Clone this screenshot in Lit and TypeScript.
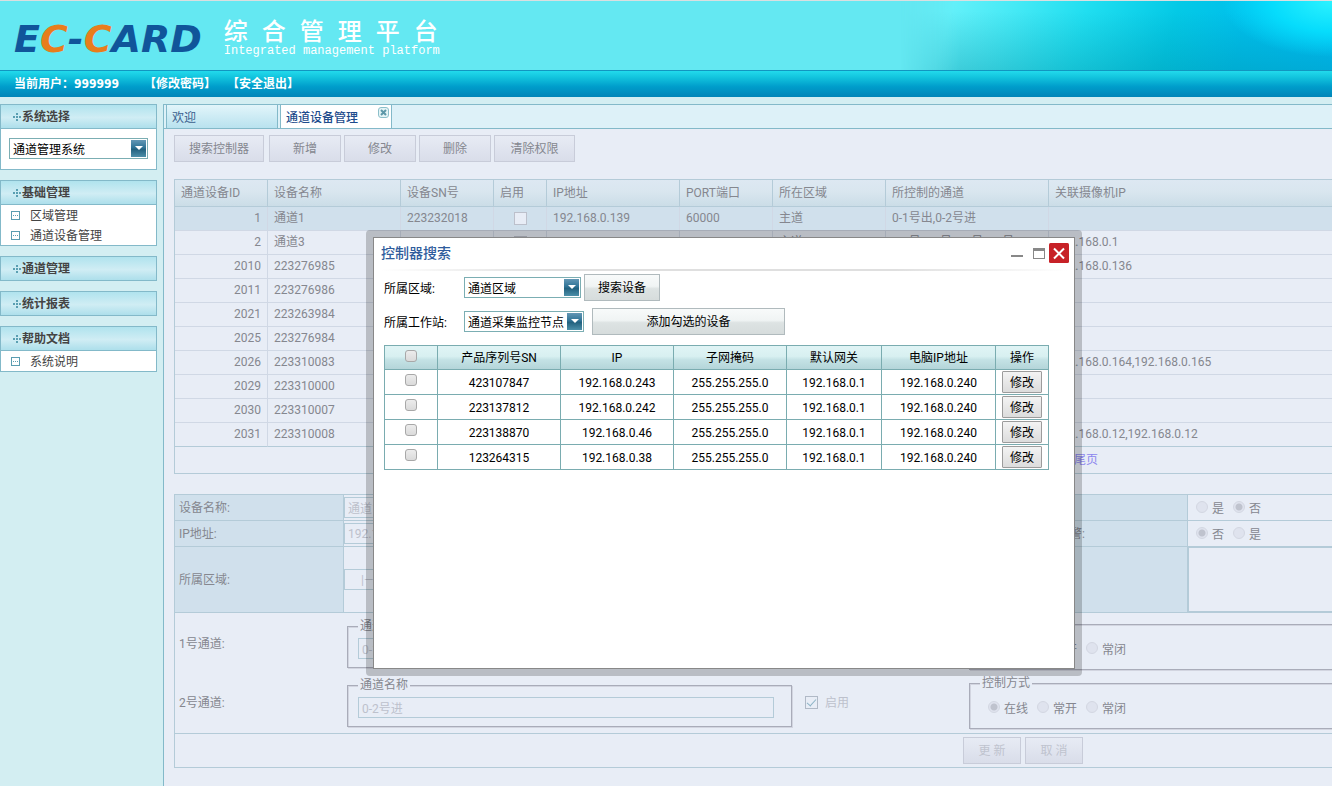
import { LitElement, html, css } from "lit";
import { customElement, property } from "lit/decorators.js";

interface Device {
  id: number;
  name: string;
  sn?: string;
  ip?: string;
  port?: string;
  area?: string;
  channels?: string;
  camera?: string;
}

const DEVICES: Device[] = [
  { id: 1, name: "通道1", sn: "223232018", ip: "192.168.0.139", port: "60000", area: "主道", channels: "0-1号出,0-2号进" },
  { id: 2, name: "通道3", sn: "223276990", ip: "192.168.0.140", port: "60000", area: "主道", channels: "0-1号,0-2号,0-3号,0-4号", camera: "192.168.0.1" },
  { id: 2010, name: "223276985", camera: "192.168.0.136" },
  { id: 2011, name: "223276986" },
  { id: 2021, name: "223263984" },
  { id: 2025, name: "223276984" },
  { id: 2026, name: "223310083", camera: "192.168.0.164,192.168.0.165" },
  { id: 2029, name: "223310000" },
  { id: 2030, name: "223310007" },
  { id: 2031, name: "223310008", camera: "192.168.0.12,192.168.0.12" },
];

const FOUND = [
  ["423107847", "192.168.0.243"],
  ["223137812", "192.168.0.242"],
  ["223138870", "192.168.0.46"],
  ["123264315", "192.168.0.38"],
];

const MENU: { title: string; items: string[] }[] = [
  { title: "基础管理", items: ["区域管理", "通道设备管理"] },
  { title: "通道管理", items: [] },
  { title: "统计报表", items: [] },
  { title: "帮助文档", items: ["系统说明"] },
];

const base = css`
  * {
    box-sizing: border-box;
  }
  button,
  input,
  select,
  textarea {
    font: inherit;
    color: inherit;
    margin: 0;
    border-radius: 0;
  }
  a {
    color: inherit;
    text-decoration: none;
  }
  table {
    border-spacing: 0;
    table-layout: fixed;
  }
  th {
    font-weight: normal;
  }
`;

@customElement("combo-box")
class ComboBox extends LitElement {
  @property() label = "";
  @property() value = "";

  static styles = [
    base,
    css`
      :host {
        display: grid;
        height: 21px;
        background: #fff;
        color: #000;
      }
      .select,
      .arrow {
        grid-area: 1 / 1;
      }
      .select {
        appearance: none;
        width: 100%;
        height: 21px;
        padding: 2px 18px 0 3px;
        border: 1px solid #7baeb3;
        background: transparent;
        line-height: 18px;
        outline: 0;
      }
      .arrow {
        justify-self: end;
        align-self: center;
        margin-right: 2px;
        pointer-events: none;
      }
    `,
  ];

  render() {
    return html`
      <select class="select" aria-label=${this.label}>
        <option>${this.value}</option>
      </select>
      <svg class="arrow" width="15" height="17" viewBox="0 0 15 17">
        <defs>
          <linearGradient id="g" x1="0" y1="0" x2="0" y2="1">
            <stop offset="0" stop-color="#6397b5" />
            <stop offset="0.45" stop-color="#2f7396" />
            <stop offset="0.55" stop-color="#22617f" />
            <stop offset="1" stop-color="#4c8fa9" />
          </linearGradient>
        </defs>
        <rect width="15" height="17" fill="url(#g)" />
        <path d="M4 6h8L8 10z" fill="#fff" />
      </svg>
    `;
  }
}

@customElement("side-bar")
class SideBar extends LitElement {
  static styles = [
    base,
    css`
      :host {
        display: flex;
        flex-direction: column;
        gap: 10px;
        width: 163px;
        padding-right: 6px;
        color: #444;
      }
      .panel {
        border: 1px solid #83b9c9;
        border-top: 0;
        background: #fff;
      }
      .panel.closed {
        border-bottom: 0;
      }
      .title {
        display: flex;
        align-items: center;
        gap: 1px;
        height: 25px;
        margin: 0;
        padding-left: 12px;
        border-top: 1px solid #83b9c9;
        border-bottom: 1px solid #83b9c9;
        background: linear-gradient(#b0e3ee, #d0edf4 55%, #addfeb);
        font-size: 12px;
        font-weight: bold;
      }
      .body {
        height: 40px;
        padding: 9px 8px;
      }
      .items {
        list-style: none;
        margin: 0;
        padding: 0;
      }
      .item {
        display: flex;
        align-items: center;
        gap: 10px;
        height: 20px;
        padding-left: 10px;
        line-height: 20px;
      }
      .label {
        padding-top: 2px;
      }
    `,
  ];

  private heading(text: string) {
    return html`<h2 class="title">
      <svg width="8" height="8" viewBox="0 0 8 8" fill="#5a9fb2">
        <path d="M3 0h2v2H3zM3 3h2v2H3zM3 6h2v2H3zM0 3h2v2H0zM6 3h2v2H6z" />
      </svg>
      ${text}
    </h2>`;
  }

  render() {
    return html`
      <section class="panel">
        ${this.heading("系统选择")}
        <div class="body"><combo-box label="系统选择" value="通道管理系统"></combo-box></div>
      </section>
      ${MENU.map(
        (m) => html`<section class="panel ${m.items.length ? "" : "closed"}">
          ${this.heading(m.title)}
          ${m.items.length
            ? html`<ul class="items">
                ${m.items.map(
                  (t) => html`<li>
                    <a class="item" href="#">
                      <svg width="9" height="9" viewBox="0 0 9 9">
                        <rect x="0.5" y="0.5" width="8" height="8" fill="#fff" stroke="#5b9db1" />
                        <path d="M2 4h1v1H2zM4 4h1v1H4zM6 4h1v1H6z" fill="#5b9db1" />
                      </svg>
                      <span class="label">${t}</span>
                    </a>
                  </li>`
                )}
              </ul>`
            : ""}
        </section>`
      )}
    `;
  }
}

@customElement("device-page")
class DevicePage extends LitElement {
  static styles = [
    base,
    css`
      :host {
        display: block;
        padding: 6px 0 0 10px;
        color: #85878f;
      }
      .content {
        min-width: 1698px;
      }
      .toolbar {
        display: flex;
        gap: 3px;
        margin-bottom: 17px;
      }
      .btn {
        height: 27px;
        padding: 1px 0 0;
        border: 1px solid #c8ccd9;
        background: linear-gradient(#e7ebf4, #e0e4ef 50%, #d9dde9);
      }
      .w58 {
        width: 58px;
        color: #bfc3ce;
      }
      .w72 {
        width: 72px;
      }
      .w81 {
        width: 81px;
      }
      .w90 {
        width: 90px;
        margin-right: 2px;
      }
      .grid {
        width: 100%;
        border: 1px solid #b4cbd8;
        border-bottom: 0;
      }
      .grid th,
      .grid td {
        padding: 0 6px;
        text-align: left;
        white-space: nowrap;
        border-right: 1px solid #d0d8e5;
        border-bottom: 1px solid #d0d8e5;
      }
      .grid th {
        height: 27px;
        border-color: #b4cbd8;
        background: linear-gradient(#dde8f2, #d9e6ef 45%, #cbdde7);
      }
      .grid td {
        height: 24px;
        line-height: 23px;
      }
      .grid td.num {
        text-align: right;
      }
      .grid td.mid {
        text-align: center;
      }
      .grid tr.on td {
        background: #d0e0ec;
      }
      .grid tr:last-child td {
        border-bottom-color: #b4cbd8;
      }
      .c93 {
        width: 93px;
      }
      .c133 {
        width: 133px;
      }
      .c53 {
        width: 53px;
      }
      .c113 {
        width: 113px;
      }
      .c163 {
        width: 163px;
      }
      .check {
        appearance: none;
        display: inline-grid;
        place-items: center;
        width: 13px;
        height: 13px;
        border: 1px solid #bcc0cb;
        background: #e8edf6;
        vertical-align: middle;
      }
      .check:checked {
        border-color: #b0b9c6;
      }
      .check:checked::after {
        content: "";
        width: 4px;
        height: 8px;
        margin-bottom: 2px;
        border: solid #8db4c6;
        border-width: 0 1px 1px 0;
        transform: rotate(42deg);
      }
      .pager {
        display: flex;
        align-items: center;
        justify-content: center;
        gap: 10px;
        height: 27px;
        margin-bottom: 20px;
        border: 1px solid #b4cbd8;
        border-top: 0;
        color: #8c86ee;
      }
      .form {
        border: 1px solid #b4cbd8;
      }
      .fields {
        display: grid;
        grid-template-columns: 169px 674px 170px 1fr;
        grid-template-rows: 26px 26px 66px;
      }
      .cap,
      .cell {
        display: flex;
        align-items: center;
        border-bottom: 1px solid #b4cbd8;
      }
      .cap {
        padding-left: 4px;
        background: #d0e0ec;
        border-right: 1px solid #b4cbd8;
      }
      .box {
        height: 21px;
        padding: 0 3px;
        border: 1px solid #b4cbd8;
        background: #e8edf6;
        color: #bdc1cc;
      }
      .wide {
        width: 400px;
      }
      select.box {
        appearance: none;
        padding-left: 16px;
        opacity: 1;
      }
      .memo {
        width: 100%;
        height: 65px;
        resize: none;
        border: 1px solid #b4cbd8;
        background: #e8edf6;
      }
      .radios {
        display: flex;
        align-items: center;
        gap: 9px;
      }
      .cell .radios {
        padding-left: 8px;
      }
      .radio {
        display: flex;
        align-items: flex-start;
        gap: 4px;
        padding-top: 2px;
        line-height: 20px;
      }
      .dot {
        appearance: none;
        width: 12px;
        height: 12px;
        margin-top: 2px;
        border: 1px solid #d3d7e2;
        border-radius: 50%;
        background: #dfe3ee;
      }
      .dot:checked {
        background: radial-gradient(#bfc3ce 0 3px, #dfe3ee 4px);
      }
      .lanes {
        display: grid;
        grid-auto-rows: 59px;
        padding: 1px 0;
        border-bottom: 1px solid #b4cbd8;
      }
      .lane {
        display: flex;
        align-items: center;
      }
      .lane-name {
        width: 172px;
        padding-left: 4px;
      }
      .group {
        position: relative;
        border: 1px solid #a9acb9;
        box-shadow: inset 1px 1px #d2d5e0, 1px 1px #d2d5e0;
      }
      .named {
        width: 445px;
        height: 42px;
        margin: 7px 1px 0 0;
        padding: 11px 10px;
      }
      .named .box {
        display: block;
        width: 416px;
      }
      .mode {
        flex: 1;
        height: 46px;
        margin-top: 6px;
        padding: 13px 18px;
      }
      .legend {
        position: absolute;
        top: -10px;
        left: 10px;
        padding: 0 2px;
        line-height: 18px;
        background: #e8edf6;
      }
      .enable {
        display: flex;
        align-items: center;
        gap: 7px;
        width: 164px;
        margin-left: 12px;
        color: #bdc1cc;
      }
      .actions {
        display: flex;
        align-items: center;
        justify-content: center;
        gap: 4px;
        height: 33px;
      }
    `,
  ];

  private radios(group: string, labels: string[], on: number) {
    return html`<div class="radios">
      ${labels.map(
        (l, i) => html`<label class="radio">
          <input class="dot" type="radio" name=${group} ?checked=${i === on} disabled />${l}
        </label>`
      )}
    </div>`;
  }

  private lane(n: number, value: string) {
    return html`<div class="lane">
      <label class="lane-name" for="lane${n}">${n}号通道:</label>
      <div class="group named" role="group" aria-label="通道名称">
        <span class="legend">通道名称</span>
        <input class="box" id="lane${n}" .value=${value} disabled />
      </div>
      <label class="enable"><input class="check" type="checkbox" checked disabled />启用</label>
      <div class="group mode" role="group" aria-label="控制方式">
        <span class="legend">控制方式</span>
        ${this.radios(`mode${n}`, ["在线", "常开", "常闭"], 0)}
      </div>
    </div>`;
  }

  render() {
    return html`<div class="content">
      <div class="toolbar">
        <button class="btn w90">搜索控制器</button>
        <button class="btn w72">新增</button>
        <button class="btn w72">修改</button>
        <button class="btn w72">删除</button>
        <button class="btn w81">清除权限</button>
      </div>

      <table class="grid">
        <thead>
          <tr>
            <th class="c93">通道设备ID</th>
            <th class="c133">设备名称</th>
            <th class="c93">设备SN号</th>
            <th class="c53">启用</th>
            <th class="c133">IP地址</th>
            <th class="c93">PORT端口</th>
            <th class="c113">所在区域</th>
            <th class="c163">所控制的通道</th>
            <th>关联摄像机IP</th>
          </tr>
        </thead>
        <tbody>
          ${DEVICES.map(
            (d, i) => html`<tr class=${i === 0 ? "on" : ""}>
              <td class="num">${d.id}</td>
              <td>${d.name}</td>
              <td>${d.sn}</td>
              <td class="mid"><input class="check" type="checkbox" aria-label="启用" disabled /></td>
              <td>${d.ip}</td>
              <td>${d.port}</td>
              <td>${d.area}</td>
              <td>${d.channels}</td>
              <td>${d.camera}</td>
            </tr>`
          )}
        </tbody>
      </table>
      <nav class="pager">
        <a href="#">首页</a><a href="#">上一页</a><a href="#">下一页</a><a href="#">尾页</a>
      </nav>

      <form class="form">
        <div class="fields">
          <label class="cap" for="name">设备名称:</label>
          <div class="cell"><input class="box wide" id="name" .value=${"通道1"} disabled /></div>
          <span class="cap">是否启用:</span>
          <div class="cell">${this.radios("enabled", ["是", "否"], 1)}</div>
          <label class="cap" for="ip">IP地址:</label>
          <div class="cell"><input class="box wide" id="ip" .value=${"192.168.0.139"} disabled /></div>
          <span class="cap">是否有报警:</span>
          <div class="cell">${this.radios("alarm", ["否", "是"], 0)}</div>
          <label class="cap" for="area">所属区域:</label>
          <div class="cell">
            <select class="box wide" id="area" disabled><option>|—主道</option></select>
          </div>
          <label class="cap" for="memo">备注:</label>
          <div class="cell"><textarea class="memo" id="memo" disabled></textarea></div>
        </div>
        <div class="lanes">${this.lane(1, "0-1号出")}${this.lane(2, "0-2号进")}</div>
        <div class="actions">
          <button class="btn w58" type="button" disabled>更 新</button>
          <button class="btn w58" type="button" disabled>取 消</button>
        </div>
      </form>
    </div>`;
  }
}

@customElement("search-window")
class SearchWindow extends LitElement {
  static styles = [
    base,
    css`
      :host {
        display: block;
        padding: 7px;
        border-radius: 4px;
        background: rgba(0, 0, 0, 0.2);
        color: #000;
      }
      .frame {
        height: 432px;
        border: 1px solid #888;
        background: #fff;
      }
      .head {
        display: flex;
        align-items: center;
        height: 31px;
        padding: 0 5px 2px 7px;
      }
      .title {
        flex: 1;
        margin: 0;
        font-size: 14px;
        font-weight: 500;
        color: #2f5c9c;
      }
      .tool {
        display: grid;
        place-items: center;
        width: 20px;
        height: 20px;
        padding: 0;
        border: 0;
        background: none;
      }
      .rule {
        height: 2px;
        margin: 0 6px;
        background: linear-gradient(90deg, #fff, #dfdfdf 25%, #dfdfdf 75%, #fff);
      }
      .body {
        padding: 3px 10px;
      }
      .row {
        display: flex;
        align-items: center;
        height: 27px;
        margin-bottom: 7px;
      }
      .caption {
        width: 80px;
        padding-top: 2px;
      }
      .area {
        width: 117px;
      }
      .station {
        width: 120px;
      }
      .btn {
        height: 27px;
        padding: 0;
        border: 1px solid #b0babd;
        background: linear-gradient(#f8fafa, #f0f4f4 45%, #dde3e3 55%, #d6dcdc);
      }
      .find {
        width: 76px;
        margin-left: 3px;
      }
      .add {
        width: 193px;
        margin-left: 8px;
      }
      .list {
        width: 665px;
        margin-top: 10px;
        border-top: 1px solid #7aacb0;
        border-left: 1px solid #7aacb0;
        text-align: center;
      }
      .list th,
      .list td {
        height: 25px;
        padding: 0;
        border-right: 1px solid #7aacb0;
        border-bottom: 1px solid #7aacb0;
      }
      .list td {
        padding-top: 2px;
      }
      .list td:first-child,
      .list td:last-child {
        padding-top: 0;
      }
      .list th {
        height: 24px;
        background: linear-gradient(#e0f4f5, #d8f0f1 45%, #c4e2e5 60%, #b4d5d9);
      }
      .check {
        appearance: none;
        display: block;
        width: 12px;
        height: 12px;
        margin: 0 auto 4px;
        border: 1px solid #a8a8a8;
        border-radius: 3px;
        background: linear-gradient(#ececec, #dadada);
      }
      .edit {
        display: block;
        width: 40px;
        height: 22px;
        margin: 0 auto;
        padding: 1px 0 0;
        border: 1px solid #9c9c9c;
        border-radius: 1px;
        background: linear-gradient(#f3f3f3, #dcdcdc);
      }
      .c53 {
        width: 53px;
      }
      .c123 {
        width: 123px;
      }
      .c113 {
        width: 113px;
      }
      .c95 {
        width: 95px;
      }
      .c114 {
        width: 114px;
      }
    `,
  ];

  render() {
    return html`<div class="frame" role="dialog" aria-label="控制器搜索">
      <div class="head">
        <h2 class="title">控制器搜索</h2>
        <button class="tool" aria-label="最小化">
          <svg width="20" height="20" viewBox="0 0 20 20"><path d="M2 12h12v2H2z" fill="#888" /></svg>
        </button>
        <button class="tool" aria-label="最大化">
          <svg width="20" height="20" viewBox="0 0 20 20">
            <path d="M4 5h12v11H4z M5 8v7h10V8z" fill="#888" fill-rule="evenodd" />
          </svg>
        </button>
        <button class="tool" aria-label="关闭">
          <svg width="20" height="20" viewBox="0 0 20 20">
            <rect width="20" height="20" rx="1.500" fill="#c72127" />
            <path d="M5 5.500l10 10M15 5.500l-10 10" stroke="#fff" stroke-width="2" />
          </svg>
        </button>
      </div>
      <div class="rule"></div>
      <div class="body">
        <div class="row">
          <span class="caption">所属区域:</span>
          <combo-box class="area" label="所属区域" value="通道区域"></combo-box>
          <button class="btn find">搜索设备</button>
        </div>
        <div class="row">
          <span class="caption">所属工作站:</span>
          <combo-box class="station" label="所属工作站" value="通道采集监控节点"></combo-box>
          <button class="btn add">添加勾选的设备</button>
        </div>
        <table class="list">
          <thead>
            <tr>
              <th class="c53"><input class="check" type="checkbox" aria-label="全选" /></th>
              <th class="c123">产品序列号SN</th>
              <th class="c113">IP</th>
              <th class="c113">子网掩码</th>
              <th class="c95">默认网关</th>
              <th class="c114">电脑IP地址</th>
              <th class="c53">操作</th>
            </tr>
          </thead>
          <tbody>
            ${FOUND.map(
              ([sn, ip]) => html`<tr>
                <td><input class="check" type="checkbox" aria-label=${sn} /></td>
                <td>${sn}</td>
                <td>${ip}</td>
                <td>255.255.255.0</td>
                <td>192.168.0.1</td>
                <td>192.168.0.240</td>
                <td><button class="edit">修改</button></td>
              </tr>`
            )}
          </tbody>
        </table>
      </div>
    </div>`;
  }
}

@customElement("app-root")
class AppRoot extends LitElement {
  static styles = [
    base,
    css`
      :host {
        position: relative;
        display: flex;
        flex-direction: column;
        height: 100vh;
        overflow: hidden;
        background: #d3eef2;
        font: 12px/18px Roboto, "Noto Sans CJK SC", sans-serif;
      }
      .banner {
        display: flex;
        justify-content: space-between;
        height: 70px;
        border-top: 1px solid #dadfe0;
        background: #64e8f2;
      }
      .brand {
        display: flex;
        align-items: center;
        gap: 22px;
        padding: 6px 0 0 14px;
      }
      .logo {
        font: italic bold 38px/44px "DejaVu Sans", sans-serif;
        color: #10559a;
      }
      .hot {
        color: #e87d1c;
      }
      .slogan {
        color: #fff;
      }
      .name {
        display: flex;
        gap: 14px;
        margin: 0;
        font-size: 24px;
        line-height: 24px;
        font-weight: 500;
      }
      .sub {
        margin: 0;
        font: 12px/14px "Liberation Mono", monospace;
      }
      .glow {
        width: 432px;
        background: radial-gradient(110px 56px at 100% 0, #2cf2ff, #06dcfc 55%, transparent),
          linear-gradient(transparent 15%, rgba(0, 130, 150, 0.3)),
          linear-gradient(106deg, #64e8f2 3%, #63f0f9 12%, #45e9f5 26%, #20def0 42%, #04c9e6 62%, #00bfec 78%, #00bdf6 100%);
        mask-image: linear-gradient(90deg, transparent, #000 60px);
      }
      .userbar {
        display: flex;
        align-items: center;
        height: 27px;
        padding-left: 14px;
        border-top: 1px solid #1296c0;
        background: linear-gradient(#22daec, #12c3dd 25%, #009dcb 60%, #0085b8);
        color: #fff;
        font-weight: bold;
        font-family: "DejaVu Sans Condensed", "Noto Sans CJK SC", sans-serif;
      }
      .user {
        margin-right: 25px;
      }
      .link {
        margin-right: 11px;
      }
      .main {
        display: flex;
        flex: 1;
        min-height: 0;
        margin-top: 7px;
      }
      .work {
        flex: 1;
        min-width: 0;
        overflow: hidden;
        border-left: 1px solid #83b9c9;
        background: #e8edf6;
      }
      .tabs {
        display: flex;
        gap: 2px;
        height: 25px;
        padding-left: 2px;
        border-top: 1px solid #83b9c9;
        border-bottom: 1px solid #83b9c9;
        background: #ddf1f8;
      }
      .tab {
        display: flex;
        align-items: center;
        justify-content: space-between;
        width: 112px;
        padding: 2px 2px 0 5px;
        border: solid #83b9c9;
        border-width: 0 1px;
        background: linear-gradient(#e2f5fa, #b9e2ef);
        color: #3b5f8e;
      }
      .tab.active {
        background: #fff;
        color: #1d4b8c;
        font-weight: 500;
      }
      .close {
        align-self: flex-start;
        display: flex;
        padding: 0;
        border: 0;
        background: none;
      }
      .dialog {
        position: absolute;
        top: 230px;
        left: 366px;
        width: 716px;
      }
    `,
  ];

  render() {
    return html`
      <header>
        <div class="banner">
          <div class="brand">
            <div class="logo">E<span class="hot">C</span>-<span class="hot">C</span>ARD</div>
            <div class="slogan">
              <h1 class="name">${[..."综合管理平台"].map((c) => html`<span>${c}</span>`)}</h1>
              <p class="sub">Integrated management platform</p>
            </div>
          </div>
          <div class="glow"></div>
        </div>
        <div class="userbar">
          <span class="user">当前用户：999999</span>
          <a class="link" href="#">【修改密码】</a>
          <a class="link" href="#">【安全退出】</a>
        </div>
      </header>
      <div class="main">
        <side-bar></side-bar>
        <main class="work">
          <nav class="tabs">
            <a class="tab" href="#">欢迎</a>
            <a class="tab active" href="#"
              >通道设备管理
              <button class="close" aria-label="关闭">
                <svg width="11" height="11" viewBox="0 0 11 11">
                  <rect x="0.5" y="0.5" width="10" height="10" rx="2.500" fill="#e4f4f6" stroke="#8cbfca" />
                  <path d="M3 3l5 5M8 3l-5 5" stroke="#5d97a8" stroke-width="2" />
                </svg></button
            ></a>
          </nav>
          <device-page></device-page>
        </main>
      </div>
      <search-window class="dialog"></search-window>
    `;
  }
}
